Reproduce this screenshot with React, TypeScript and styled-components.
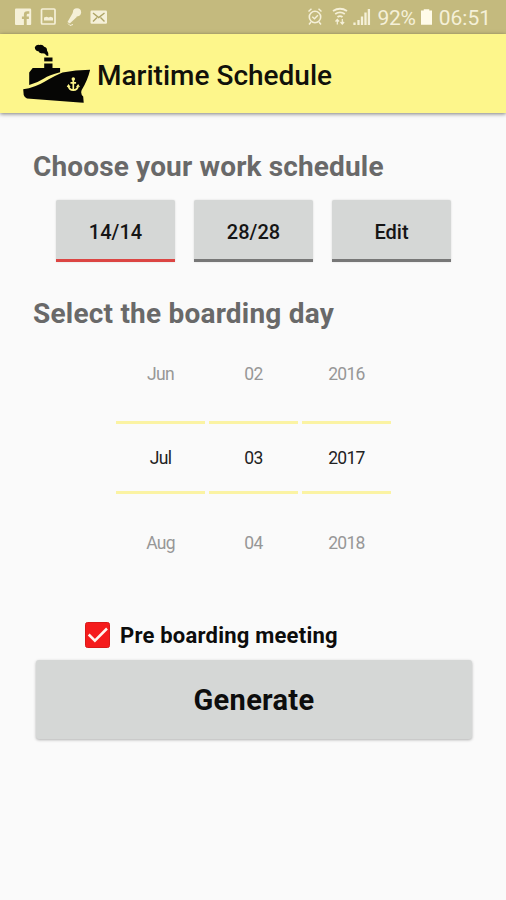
import React from "react";
import styled, { createGlobalStyle } from "styled-components";

const GlobalStyle = createGlobalStyle`
  * { box-sizing: border-box; }
  body { margin: 0; background: #fafafa; font-family: Roboto, sans-serif; }
`;

const Screen = styled.div`
  height: 900px;
  width: 506px;
  background: #fafafa;
  overflow: hidden;
`;

const StatusBar = styled.header`
  height: 34px;
  padding: 0 15px 0 14px;
  display: flex;
  align-items: center;
  justify-content: space-between;
  background: #c4ba7e;
  color: #f5f0d8;
`;

const StatusText = styled.span<{ $spacing: number }>`
  font-size: 21px;
  line-height: 34px;
  padding-top: 1px;
  letter-spacing: ${(p) => p.$spacing}px;
`;

const StatusGroup = styled.div`
  display: flex;
  align-items: center;
  height: 34px;
`;

const AppBar = styled.div`
  height: 79px;
  padding-left: 22px;
  display: flex;
  align-items: center;
  background: #fdf68b;
  box-shadow: 0 1px 4px rgba(0, 0, 0, 0.5);
`;

const Title = styled.h1`
  margin: 5px 0 0 7px;
  font-size: 28px;
  line-height: 32px;
  font-weight: 500;
  color: #11110a;
  white-space: nowrap;
`;

const Content = styled.main`
  padding: 36px 34px 0 33px;
  display: flex;
  flex-direction: column;
`;

const Heading = styled.h2<{ $spacing: number }>`
  margin: 0;
  font-size: 28px;
  line-height: 36px;
  font-weight: 700;
  letter-spacing: ${(p) => p.$spacing}px;
  color: #696969;
  white-space: nowrap;
`;

const ScheduleRow = styled.div`
  display: flex;
  gap: 19px;
  margin: 15px 0 34px 23px;
`;

const ScheduleButton = styled.button<{ $active?: boolean }>`
  width: 119px;
  height: 62px;
  padding: 5px 0 0;
  border: 0;
  border-bottom: 3.5px solid ${(p) => (p.$active ? "#dc4543" : "#777777")};
  border-radius: 2px 2px 0 0;
  background: #d5d7d6;
  box-shadow: 0 0 2px rgba(0, 0, 0, 0.15);
  font: 500 20px/24px Roboto, sans-serif;
  color: #151515;
`;

const Picker = styled.div`
  display: flex;
  gap: 4px;
  margin: 6px 0 0 83px;
`;

const PickerColumn = styled.div`
  width: 89px;
  display: flex;
  flex-direction: column;
  text-align: center;
  font-size: 17.5px;
  letter-spacing: -0.7px;
`;

const Option = styled.div`
  height: 83px;
  line-height: 22px;
  color: #979797;
  &:first-child { padding-top: 25px; }
  &:last-child { padding-top: 38px; }
`;

const Selected = styled.div`
  height: 73px;
  border: solid #fbf3a3;
  border-width: 3px 0;
  line-height: 69px;
  color: #222222;
`;

const CheckRow = styled.label`
  display: flex;
  align-items: center;
  gap: 10px;
  height: 26px;
  margin: 45px 0 0 52px;
`;

const CheckLabel = styled.span`
  font-size: 22px;
  line-height: 26px;
  padding-top: 2px;
  font-weight: 700;
  letter-spacing: 0.22px;
  color: #0c0c0c;
  white-space: nowrap;
`;

const GenerateButton = styled.button`
  width: 436px;
  height: 79px;
  margin: 12px 0 0 3px;
  padding: 0;
  border: 0;
  border-radius: 3px;
  background: #d5d7d6;
  box-shadow: 0 1px 3px rgba(0, 0, 0, 0.3);
  font: 700 29px/34px Roboto, sans-serif;
  letter-spacing: 0.3px;
  color: #0d0d0d;
`;

const Notifications = () => (
  <svg width="94" height="20" viewBox="14 7 94 20" fill="none">
    <path fill="#f5f0d8" fillRule="evenodd" d="M16 8.500H30a1.200 1.200 0 0 1 1.200 1.200V24a1 1 0 0 1-1 1H26.700V19h2.200V16.500h-2.200V15q0-1.200 1.300-1.200h1.300v-2.500h-2.200q-3.200 0-3.200 3.200v2h-2V19h2v6H16a1 1 0 0 1-1-1V9.700q0-1.200 1-1.200Z" />
    <rect x="41.500" y="9" width="13.500" height="15" rx="1" stroke="#f5f0d8" strokeWidth="1.700" />
    <path d="M44 20.500V17.500l2.500-.8 2.200.8 2-.8 2.300 1v2.800Z" fill="#f5f0d8" />
    <circle cx="77" cy="12.300" r="4.100" fill="#f5f0d8" />
    <path d="m73 12.500 4 4.200-7.200 6.800-2.300-1.400Z" fill="#f5f0d8" />
    <path d="m68 23.500 2 2 3-1" stroke="#f5f0d8" strokeWidth="1" />
    <rect x="90.500" y="10.500" width="16.500" height="13.300" rx="1.200" fill="#f5f0d8" />
    <path d="m93 13 5.700 4.600L104.500 13M93 21.500l4-4M104.500 21.500l-4-4" stroke="#aea466" strokeWidth="1.400" />
  </svg>
);

const SignalIcons = () => (
  <svg width="72" height="22" viewBox="306 6 72 22" fill="none" stroke="#f5f0d8">
    <circle cx="315" cy="17" r="5.700" strokeWidth="1.600" />
    <path d="m308.500 11.500 3-2.700M321.500 11.500l-3-2.700M311 22l-2 2.500M319 22l2 2.500M312.300 16.800l2.200 2 3.400-3.500" strokeWidth="1.500" />
    <path d="M333 11q7-4.500 14 0M335.200 14q4.800-3.300 9.600 0M337.500 17q2.500-1.800 5 0" strokeWidth="1.900" />
    <path d="M337.300 24.500v-5M335.500 21.500l1.800-2 1.800 2M342.300 19v5M340.500 22l1.800 2 1.800-2" strokeWidth="1.200" />
    <path d="M354.500 25v-2.500M358.500 25v-5M362 25v-8.500M365.500 25V12.500M368.900 25V9" strokeWidth="2.300" />
  </svg>
);

const Battery = styled.svg`
  margin: 0 7px 0 5px;
`;

const ShipLogo = () => (
  <svg width="68" height="62" viewBox="22 42 68 62">
    <path fill="#060605" d="M34.800 46.200Q36 43 39.500 43.900q3.200-.8 4.700 1.900 3 .9 2.800 3.600 1.900 2.200 1.300 5.600l-2-.4q-1.300-2.700-4.300-2.200-3-.5-3.600-2.200-3.400-.3-3.600-4Z" />
    <path fill="#060605" d="M44.200 56.500h8.300v3.900h-8.300Z" />
    <path fill="#060605" d="M44.200 62.500h8.300v4.400h7.600v4.300Q49 74 44 77.500q-7 4.500-14.800 6.500V71.500l3.500-4.600h11.500Z" />
    <path fill="#060605" d="M23.200 88.300Q35 86.500 45 80.500T62.500 71.500q13-2.600 27.600-2.700-2.200 9.900-8.400 20.300-1.500 3.500 1.500 6.500l.5 6.200-4-.3L27 97.500q-2.500-1-3.300-3.500Z" />
    <g fill="none" stroke="#fdf68b" strokeWidth="1.700">
      <circle cx="73.300" cy="78" r=".9" />
      <path d="M73.300 79v10M70.500 81.800h5.600M68.500 85q.6 3.900 4.800 4.200 4.200-.3 4.800-4.200" />
      <path d="m67.200 86 1.300-2 1.600 2M76.500 86l1.600-2 1.300 2" strokeWidth="1.100" />
    </g>
  </svg>
);

const CheckIcon = () => (
  <svg width="25" height="26" viewBox="0 0 25 26" fill="none">
    <rect x=".5" y=".5" width="24" height="25" rx="2" fill="#f51b1c" stroke="#d91919" />
    <path d="m3.700 12.500 6.200 6.200L22 6.500" stroke="#fff5ee" strokeWidth="2.500" />
  </svg>
);

const columns = [
  ["Jun", "Jul", "Aug"],
  ["02", "03", "04"],
  ["2016", "2017", "2018"],
];

export default function App() {
  return (
    <>
      <GlobalStyle />
      <Screen>
        <StatusBar>
          <Notifications />
          <StatusGroup>
            <SignalIcons />
            <StatusText $spacing={-0.3}>92%</StatusText>
            <Battery width="11" height="16" viewBox="0 0 12 17">
              <path fill="#fffbe9" d="M3 0h6v1.500H12v15.500H0V1.500h3Z" />
            </Battery>
            <StatusText $spacing={0}>06:51</StatusText>
          </StatusGroup>
        </StatusBar>
        <AppBar>
          <ShipLogo />
          <Title>Maritime Schedule</Title>
        </AppBar>
        <Content>
          <Heading $spacing={0.15}>Choose your work schedule</Heading>
          <ScheduleRow>
            <ScheduleButton $active>14/14</ScheduleButton>
            <ScheduleButton>28/28</ScheduleButton>
            <ScheduleButton>Edit</ScheduleButton>
          </ScheduleRow>
          <Heading $spacing={0.21}>Select the boarding day</Heading>
          <Picker>
            {columns.map(([previous, current, next]) => (
              <PickerColumn key={current}>
                <Option>{previous}</Option>
                <Selected>{current}</Selected>
                <Option>{next}</Option>
              </PickerColumn>
            ))}
          </Picker>
          <CheckRow>
            <CheckIcon />
            <CheckLabel>Pre boarding meeting</CheckLabel>
          </CheckRow>
          <GenerateButton>Generate</GenerateButton>
        </Content>
      </Screen>
    </>
  );
}
